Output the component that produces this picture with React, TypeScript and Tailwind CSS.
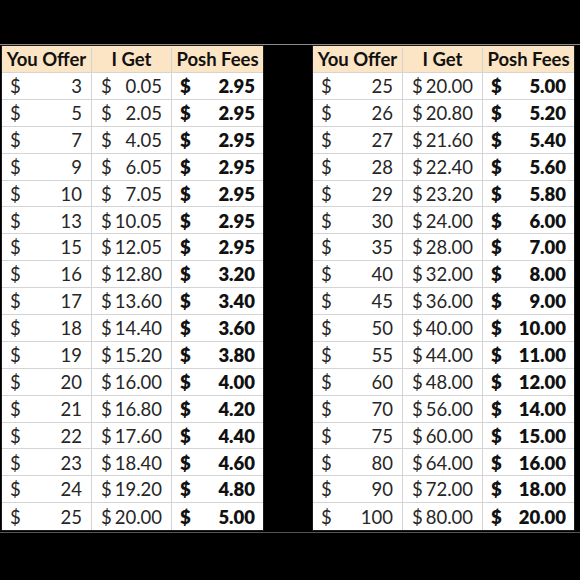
import React from 'react'

const left: [number, string, string][] = [
  [3, '0.05', '2.95'],
  [5, '2.05', '2.95'],
  [7, '4.05', '2.95'],
  [9, '6.05', '2.95'],
  [10, '7.05', '2.95'],
  [13, '10.05', '2.95'],
  [15, '12.05', '2.95'],
  [16, '12.80', '3.20'],
  [17, '13.60', '3.40'],
  [18, '14.40', '3.60'],
  [19, '15.20', '3.80'],
  [20, '16.00', '4.00'],
  [21, '16.80', '4.20'],
  [22, '17.60', '4.40'],
  [23, '18.40', '4.60'],
  [24, '19.20', '4.80'],
  [25, '20.00', '5.00'],
]

const right: [number, string, string][] = [
  [25, '20.00', '5.00'],
  [26, '20.80', '5.20'],
  [27, '21.60', '5.40'],
  [28, '22.40', '5.60'],
  [29, '23.20', '5.80'],
  [30, '24.00', '6.00'],
  [35, '28.00', '7.00'],
  [40, '32.00', '8.00'],
  [45, '36.00', '9.00'],
  [50, '40.00', '10.00'],
  [55, '44.00', '11.00'],
  [60, '48.00', '12.00'],
  [70, '56.00', '14.00'],
  [75, '60.00', '15.00'],
  [80, '64.00', '16.00'],
  [90, '72.00', '18.00'],
  [100, '80.00', '20.00'],
]

function FeeTable({ rows }: { rows: [number, string, string][] }) {
  return (
    <div className="w-[263px] border-[1.5px] border-[#1a1a1a] bg-white">
      {/* header */}
      <div className="flex h-[27px] bg-[#fce5c4] text-[18.5px] font-bold text-[#111] border-b border-[#d4d4d4] pt-[2px]">
        <div className="w-[90px] flex items-center justify-center border-r border-[#d4d4d4]">You Offer</div>
        <div className="w-[80px] flex items-center justify-center border-r border-[#d4d4d4]">I Get</div>
        <div className="flex-1 flex items-center justify-center">Posh Fees</div>
      </div>
      {rows.map(([offer, get, fee], i) => (
        <div
          key={i}
          className={`flex h-[26.9px] text-[18.5px] text-[#262626] ${i < rows.length - 1 ? 'border-b border-[#d4d4d4]' : ''}`}
        >
          <div className="w-[90px] flex items-center justify-between pl-[8px] pr-[9px] pt-[2px] border-r border-[#d4d4d4]">
            <span>$</span>
            <span>{offer}</span>
          </div>
          <div className="w-[80px] flex items-center justify-between pl-[9px] pr-[9px] pt-[2px] border-r border-[#d4d4d4]">
            <span>$</span>
            <span>{get}</span>
          </div>
          <div className="flex-1 flex items-center justify-between pl-[8px] pr-[8px] pt-[2px] font-extrabold text-[#111]">
            <span>$</span>
            <span>{fee}</span>
          </div>
        </div>
      ))}
    </div>
  )
}

export default function App() {
  return (
    <div
      className="w-[580px] h-[580px] bg-black pt-[44px] overflow-hidden"
      style={{ fontFamily: 'Lato, "Open Sans", sans-serif' }}
    >
      <div className="border-t border-[#8a8a8a]">
        <div className="flex pl-[1px]">
          <FeeTable rows={left} />
          <div className="w-[48px]" />
          <FeeTable rows={right} />
        </div>
        <div className="mt-[1px] h-[1px] bg-[#555]" />
      </div>
    </div>
  )
}
